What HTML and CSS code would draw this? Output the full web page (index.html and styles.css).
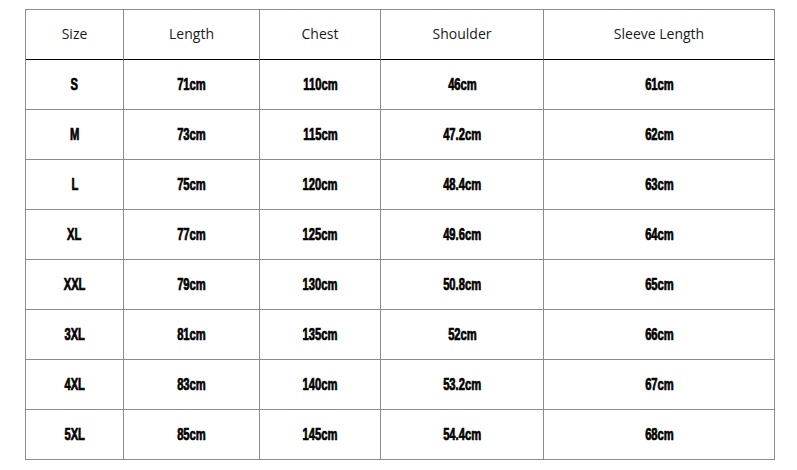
FILE: index.html
```html
<!DOCTYPE html>
<html lang="en">
<head>
<meta charset="utf-8">
<title>Size Chart</title>
<link rel="stylesheet" href="styles.css">
</head>
<body>
<div class="page">
  <table class="size-table">
    <thead>
      <tr>
        <th class="c1">Size</th>
        <th class="c2">Length</th>
        <th class="c3">Chest</th>
        <th class="c4">Shoulder</th>
        <th class="c5">Sleeve Length</th>
      </tr>
    </thead>
    <tbody>
      <tr><td><span class="v">S</span></td><td><span class="v">71cm</span></td><td><span class="v">110cm</span></td><td><span class="v">46cm</span></td><td><span class="v">61cm</span></td></tr>
      <tr><td><span class="v">M</span></td><td><span class="v">73cm</span></td><td><span class="v">115cm</span></td><td><span class="v">47.2cm</span></td><td><span class="v">62cm</span></td></tr>
      <tr><td><span class="v">L</span></td><td><span class="v">75cm</span></td><td><span class="v">120cm</span></td><td><span class="v">48.4cm</span></td><td><span class="v">63cm</span></td></tr>
      <tr><td><span class="v">XL</span></td><td><span class="v">77cm</span></td><td><span class="v">125cm</span></td><td><span class="v">49.6cm</span></td><td><span class="v">64cm</span></td></tr>
      <tr><td><span class="v">XXL</span></td><td><span class="v">79cm</span></td><td><span class="v">130cm</span></td><td><span class="v">50.8cm</span></td><td><span class="v">65cm</span></td></tr>
      <tr><td><span class="v">3XL</span></td><td><span class="v">81cm</span></td><td><span class="v">135cm</span></td><td><span class="v">52cm</span></td><td><span class="v">66cm</span></td></tr>
      <tr><td><span class="v">4XL</span></td><td><span class="v">83cm</span></td><td><span class="v">140cm</span></td><td><span class="v">53.2cm</span></td><td><span class="v">67cm</span></td></tr>
      <tr><td><span class="v">5XL</span></td><td><span class="v">85cm</span></td><td><span class="v">145cm</span></td><td><span class="v">54.4cm</span></td><td><span class="v">68cm</span></td></tr>
    </tbody>
  </table>
</div>
</body>
</html>
```

FILE: styles.css
```css
html, body {
  margin: 0;
  padding: 0;
  background: #ffffff;
}

.page {
  padding: 9px 0 0 25px;
}

.size-table {
  table-layout: fixed;
  border-collapse: separate;
  border-spacing: 0;
  width: 750px;
  border-left: 1px solid #8c8c8c;
  border-top: 1px solid #8c8c8c;
}

.size-table th,
.size-table td {
  box-sizing: border-box;
  height: 50px;
  padding: 0;
  text-align: center;
  vertical-align: middle;
  border-right: 1px solid #8c8c8c;
  border-bottom: 1px solid #8c8c8c;
}

.size-table th {
  font-family: "Open Sans", "Noto Sans", sans-serif;
  font-weight: 400;
  font-size: 14px;
  color: #1a1a1a;
  border-bottom-color: #000000;
  padding-bottom: 3px;
}

.size-table td {
  font-family: "Liberation Sans", Arial, sans-serif;
  font-weight: 700;
  font-size: 16px;
  color: #000000;
  -webkit-text-stroke: 0.7px #000;
  padding-bottom: 0;
}

.v {
  display: inline-block;
  transform: scaleX(0.7);
}

.c1 { width: 98px; }
.c2 { width: 136px; }
.c3 { width: 121px; }
.c4 { width: 163px; }
.c5 { width: 231px; }
```
